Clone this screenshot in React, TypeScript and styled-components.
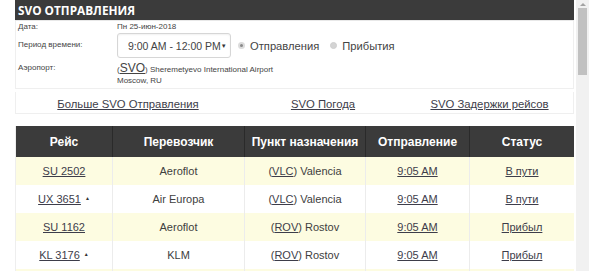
import styled, { createGlobalStyle } from "styled-components";

type Flight = {
  code: string;
  share?: boolean;
  carrier: string;
  iata: string;
  city: string;
  time: string;
  status: string;
};

const flights: Flight[] = [
  { code: "SU 2502", carrier: "Aeroflot", iata: "VLC", city: "Valencia", time: "9:05 AM", status: "В пути" },
  { code: "UX 3651", share: true, carrier: "Air Europa", iata: "VLC", city: "Valencia", time: "9:05 AM", status: "В пути" },
  { code: "SU 1162", carrier: "Aeroflot", iata: "ROV", city: "Rostov", time: "9:05 AM", status: "Прибыл" },
  { code: "KL 3176", share: true, carrier: "KLM", iata: "ROV", city: "Rostov", time: "9:05 AM", status: "Прибыл" },
  { code: "SU 1270", carrier: "Aeroflot", iata: "KUF", city: "Samara", time: "9:10 AM", status: "Прибыл" },
  { code: "AF 4918", share: true, carrier: "Air France", iata: "KUF", city: "Samara", time: "9:10 AM", status: "Прибыл" },
  { code: "SU 2130", carrier: "Aeroflot", iata: "FRA", city: "Frankfurt", time: "9:15 AM", status: "В пути" },
  { code: "SU 1478", carrier: "Aeroflot", iata: "KRR", city: "Krasnodar", time: "9:20 AM", status: "Прибыл" },
];

function App() {
  return (
    <>
      <GlobalStyle />
      <Page>
        <Viewport>
          <Widget>
            <TitleBar>SVO ОТПРАВЛЕНИЯ</TitleBar>
            <InfoBox>
              <InfoRow>
                <Label>Дата:</Label>
                <SmallText>Пн 25-июн-2018</SmallText>
              </InfoRow>
              <InfoRow>
                <Label>Период времени:</Label>
                <Controls>
                  <SelectBox>
                    <span>9:00 AM - 12:00 PM</span>
                    <Caret>▼</Caret>
                  </SelectBox>
                  <RadioLabel>
                    <RadioDot checked />
                    Отправления
                  </RadioLabel>
                  <RadioLabel>
                    <RadioDot />
                    Прибытия
                  </RadioLabel>
                </Controls>
              </InfoRow>
              <InfoRow $top>
                <Label $offset={5}>Аэропорт:</Label>
                <AirportBlock>
                  <AirportLine>
                    <SmallText>(</SmallText>
                    <AirportCode href="#">SVO</AirportCode>
                    <SmallText>) Sheremetyevo International Airport</SmallText>
                  </AirportLine>
                  <CityLine>Moscow, RU</CityLine>
                </AirportBlock>
              </InfoRow>
            </InfoBox>
            <LinksBar>
              <TextLink href="#">Больше SVO Отправления</TextLink>
              <TextLink href="#">SVO Погода</TextLink>
              <TextLink href="#">SVO Задержки рейсов</TextLink>
            </LinksBar>
            <FlightTable>
              <colgroup>
                <col style={{ width: 97 }} />
                <col style={{ width: 132 }} />
                <col style={{ width: 121 }} />
                <col style={{ width: 104 }} />
                <col />
              </colgroup>
              <thead>
                <tr>
                  <HeadCell>Рейс</HeadCell>
                  <HeadCell>Перевозчик</HeadCell>
                  <HeadCell>Пункт назначения</HeadCell>
                  <HeadCell>Отправление</HeadCell>
                  <HeadCell>Статус</HeadCell>
                </tr>
              </thead>
              <tbody>
                {flights.map((f, i) => (
                  <FlightRow key={f.code} $odd={i % 2 === 0}>
                    <Cell>
                      <TextLink href="#">{f.code}</TextLink>
                      {f.share && <ShareMark>▲</ShareMark>}
                    </Cell>
                    <Cell>{f.carrier}</Cell>
                    <Cell>
                      (<TextLink href="#">{f.iata}</TextLink>) {f.city}
                    </Cell>
                    <Cell>
                      <TextLink href="#">{f.time}</TextLink>
                    </Cell>
                    <Cell>
                      <TextLink href="#">{f.status}</TextLink>
                    </Cell>
                  </FlightRow>
                ))}
              </tbody>
            </FlightTable>
          </Widget>
        </Viewport>
        <ScrollBar>
          <ScrollArrow />
          <ScrollThumb />
        </ScrollBar>
      </Page>
    </>
  );
}

export default App;

const GlobalStyle = createGlobalStyle`
  html, body {
    margin: 0;
    padding: 0;
    background: #ffffff;
    overflow: hidden;
  }
  body {
    font-family: "Liberation Sans", Arial, sans-serif;
    color: #333333;
  }
`;

const Page = styled.div`
  display: flex;
  height: 271px;
`;

const Viewport = styled.div`
  width: 576px;
  height: 271px;
  overflow: hidden;
`;

const ScrollBar = styled.div`
  width: 13px;
  height: 271px;
  background: #f1f1f1;
  display: flex;
  flex-direction: column;
  align-items: center;
`;

const ScrollArrow = styled.div`
  margin-top: 3px;
  width: 0;
  height: 0;
  border-left: 3px solid transparent;
  border-right: 3px solid transparent;
  border-bottom: 3px solid #a3a3a3;
`;

const ScrollThumb = styled.div`
  margin-top: 2px;
  width: 9px;
  height: 67px;
  background: #c1c1c1;
`;

const Widget = styled.div`
  margin: 0 2px 0 15px;
  display: flex;
  flex-direction: column;
`;

const TitleBar = styled.div`
  height: 20px;
  line-height: 21px;
  background: #3b3b3b;
  color: #ffffff;
  font-family: "Open Sans", "Liberation Sans", sans-serif;
  font-weight: 700;
  font-size: 11.8px;
  padding-left: 3px;
  border-bottom: 1px solid #e8e8e8;
`;

const InfoBox = styled.div`
  display: flex;
  flex-direction: column;
  border: 1px solid #efefef;
  border-top: 0;
  padding: 1px 0 1px 2px;
`;

const InfoRow = styled.div<{ $top?: boolean }>`
  display: flex;
  align-items: ${(p) => (p.$top ? "flex-start" : "center")};
`;

const Label = styled.div<{ $offset?: number }>`
  width: 99px;
  font-size: 8px;
  line-height: 10px;
  color: #444444;
  padding-top: ${(p) => p.$offset ?? 0}px;
`;

const SmallText = styled.span`
  font-size: 8px;
  line-height: 10px;
  color: #444444;
`;

const Controls = styled.div`
  display: flex;
  align-items: center;
  padding: 1px 0 0;
`;

const SelectBox = styled.div`
  width: 114px;
  height: 25px;
  box-sizing: border-box;
  border: 1px solid #d6d6d6;
  border-radius: 3px;
  box-shadow: inset 0 1px 2px rgba(0, 0, 0, 0.06);
  display: flex;
  align-items: center;
  justify-content: space-between;
  padding: 0 5px 0 10px;
  font-size: 10.5px;
  white-space: nowrap;
  color: #444444;
`;

const Caret = styled.span`
  font-size: 6px;
  color: #333333;
`;

const RadioLabel = styled.label`
  display: flex;
  align-items: center;
  font-size: 11.2px;
  color: #444444;
  margin-left: 7px;
  & + & {
    margin-left: 11px;
  }
`;

const RadioDot = styled.span<{ checked?: boolean }>`
  width: 7px;
  height: 7px;
  border-radius: 50%;
  margin-right: 5px;
  box-sizing: border-box;
  background: ${(p) => (p.checked ? "#8a8a8a" : "#d4d4d4")};
  border: ${(p) => (p.checked ? "2px solid #dcdcdc" : "1px solid #cfcfcf")};
`;

const AirportBlock = styled.div`
  display: flex;
  flex-direction: column;
  padding-top: 2px;
`;

const AirportLine = styled.div`
  line-height: 14px;
  height: 14px;
`;

const CityLine = styled.div`
  font-size: 8px;
  line-height: 11px;
  color: #444444;
  margin-top: 1px;
  margin-bottom: 1px;
`;

const AirportCode = styled.a`
  font-size: 12px;
  color: #444444;
  text-decoration: underline;
`;

const TextLink = styled.a`
  color: #3d3d4a;
  text-decoration: underline;
`;

const LinksBar = styled.div`
  margin-top: 3px;
  height: 18px;
  display: grid;
  grid-template-columns: 224px 166px 1fr;
  align-items: center;
  justify-items: center;
  font-size: 11.3px;
  border: 1px solid #efefef;
  border-top: 0;
  padding-top: 3px;
`;

const FlightTable = styled.table`
  margin-top: 12px;
  width: 100%;
  border-collapse: collapse;
  table-layout: fixed;
  font-size: 11px;
  border-left: 1px solid #eeeeee;
`;

const HeadCell = styled.th`
  height: 31px;
  padding: 0;
  background: #3b3b3b;
  color: #ffffff;
  font-weight: 700;
  font-size: 12px;
  text-align: center;
  border-left: 1px solid #2a2a2a;
  &:first-child {
    border-left: 0;
  }
`;

const FlightRow = styled.tr<{ $odd: boolean }>`
  background: ${(p) => (p.$odd ? "#fdfce1" : "#ffffff")};
`;

const Cell = styled.td`
  height: 28px;
  padding: 0;
  text-align: center;
  color: #404040;
  border-left: 1px solid #ececec;
  &:first-child {
    border-left: 0;
  }
`;

const ShareMark = styled.span`
  font-size: 5px;
  margin-left: 4px;
  vertical-align: 3px;
  color: #333333;
`;
